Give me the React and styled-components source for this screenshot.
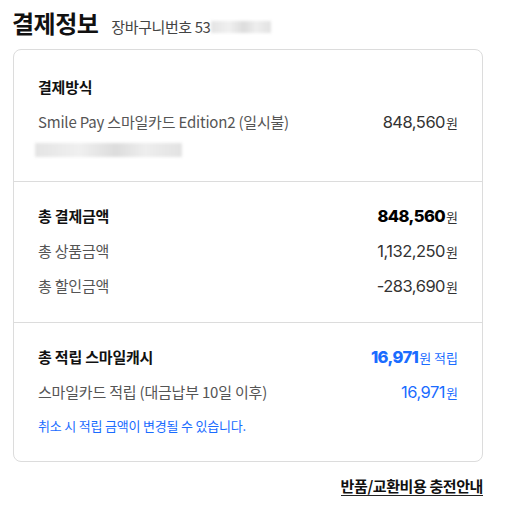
import React from 'react';
import styled, { createGlobalStyle } from 'styled-components';

const GlobalStyle = createGlobalStyle`
    body {
        margin: 0;
        background: #fff;
        font-family: "Noto Sans CJK KR", "Noto Sans", sans-serif;
        color: #222;
    }
`;

const Page = styled.div`
    width: 470px;
    padding: 5px 0 0 13px;
`;

const Header = styled.div`
    display: flex;
    align-items: baseline;
    gap: 13px;
    height: 44px;
`;

const Title = styled.h2`
    margin: 0 0 0 -1px;
    font-size: 24px;
    font-weight: 700;
    color: #111;
    letter-spacing: -0.5px;
`;

const CartNo = styled.span`
    display: flex;
    align-items: center;
    font-size: 15px;
    color: #444;
    letter-spacing: -0.4px;
`;

const Blur = styled.span`
    display: inline-block;
    width: ${p => p.w}px;
    height: ${p => p.h}px;
    margin-left: ${p => p.ml || 0}px;
    background: linear-gradient(90deg, #e4e4e4, #f0f0f0 30%, #dcdcdc 55%, #eee 75%, #e2e2e2);
    filter: blur(1.5px);
`;

const Card = styled.div`
    border: 1px solid #dcdcdc;
    border-radius: 8px;
    background: #fff;
`;

const Section = styled.div`
    padding: ${p => p.pad || '16px 24px 19px'};
    border-top: ${p => (p.first ? 'none' : '1px solid #dcdcdc')};
`;

const Row = styled.div`
    display: flex;
    justify-content: space-between;
    align-items: center;
    height: ${p => p.h || 35}px;
`;

const Label = styled.span`
    font-size: 15px;
    font-weight: ${p => (p.bold ? 700 : 400)};
    color: ${p => (p.bold ? '#111' : '#555')};
    letter-spacing: -0.2px;
`;

const Amount = styled.span`
    display: flex;
    align-items: baseline;
    gap: 0;
    color: ${p => (p.blue ? '#1a6cff' : p.bold ? '#000' : '#333')};
`;

const Num = styled.span`
    font-family: Inter, "Noto Sans", sans-serif;
    font-size: 16.5px;
    font-weight: ${p => (p.bold ? 800 : 400)};
    letter-spacing: ${p => (p.bold ? '-0.6px' : '-0.5px')};
`;

const Won = styled.span`
    font-size: 13px;
    font-weight: 400;
    margin-left: 1px;
    color: ${p => (p.blue ? '#1a6cff' : '#333')};
`;

const Note = styled.span`
    font-size: 13px;
    color: #1a6cff;
    letter-spacing: -0.2px;
`;

const Footer = styled.div`
    display: flex;
    justify-content: flex-end;
    padding-top: 15px;
`;

const Link = styled.a`
    font-size: 15px;
    line-height: 17px;
    font-weight: 700;
    color: #111;
    text-decoration: none;
    border-bottom: 1.5px solid #222;
    padding-bottom: 1px;
    letter-spacing: -0.4px;
`;

function Price({ value, bold, blue, suffix }) {
    return (
        <Amount bold={bold} blue={blue}>
            <Num bold={bold}>{value}</Num>
            <Won blue={blue}>원{suffix}</Won>
        </Amount>
    );
}

export default function App() {
    return (
        <>
            <GlobalStyle />
            <Page>
                <Header>
                    <Title>결제정보</Title>
                    <CartNo>
                        장바구니번호 53
                        <Blur w={60} h={12} />
                    </CartNo>
                </Header>

                <Card>
                    <Section first pad="19px 24px 20px">
                        <Row>
                            <Label bold>결제방식</Label>
                        </Row>
                        <Row>
                            <Label>Smile Pay 스마일카드 Edition2 (일시불)</Label>
                            <Price value="848,560" />
                        </Row>
                        <Row h={22}>
                            <Blur w={147} h={14} ml={-3} />
                        </Row>
                    </Section>

                    <Section>
                        <Row>
                            <Label bold>총 결제금액</Label>
                            <Price value="848,560" bold />
                        </Row>
                        <Row>
                            <Label>총 상품금액</Label>
                            <Price value="1,132,250" />
                        </Row>
                        <Row>
                            <Label>총 할인금액</Label>
                            <Price value="-283,690" />
                        </Row>
                    </Section>

                    <Section>
                        <Row>
                            <Label bold>총 적립 스마일캐시</Label>
                            <Price value="16,971" bold blue suffix=" 적립" />
                        </Row>
                        <Row>
                            <Label>스마일카드 적립 (대금납부 10일 이후)</Label>
                            <Price value="16,971" blue />
                        </Row>
                        <Row h={33}>
                            <Note>취소 시 적립 금액이 변경될 수 있습니다.</Note>
                        </Row>
                    </Section>
                </Card>

                <Footer>
                    <Link href="#">반품/교환비용 충전안내</Link>
                </Footer>
            </Page>
        </>
    );
}
